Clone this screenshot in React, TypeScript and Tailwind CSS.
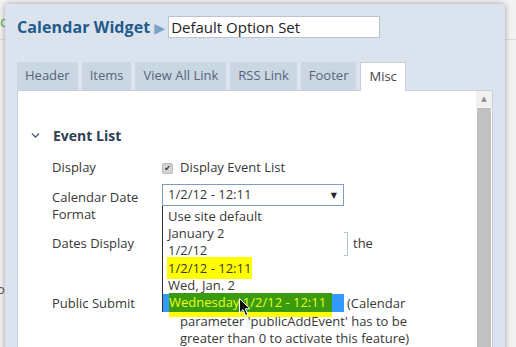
import React from 'react';
import { ChevronDown } from 'lucide-react';

const tabs = ['Header', 'Items', 'View All Link', 'RSS Link', 'Footer', 'Misc'];

const options = ['Use site default', 'January 2', '1/2/12', '1/2/12 - 12:11', 'Wed, Jan. 2', 'Wednesday 1/2/12 - 12:11'];

const Cursor = () => (
  <svg className="absolute left-[76px] top-[4px]" width="12" height="19" viewBox="0 0 12 19">
    <path d="M0.5 0.5 L0.5 15 L4 11.6 L6.6 17.6 L8.8 16.6 L6.3 10.8 L11 10.8 Z" fill="#111" stroke="#fff" strokeWidth="1" />
  </svg>
);

const App: React.FC = () => {
  return (
    <div className="relative w-[516px] h-[347px] overflow-hidden bg-[#f3f3f3] text-[13px] text-[#383838]" style={{ fontFamily: '"Open Sans", "DejaVu Sans", sans-serif' }}>
      {/* page behind the dialog */}
      <div className="absolute left-0 top-[10px] text-[15px] text-[#4caf50]">d</div>
      <div className="absolute left-0 right-0 top-[39px] h-px bg-[#dcdcdc]" />
      <div className="absolute left-[-3px] top-[280px] text-[#555]">o(</div>

      {/* dialog */}
      <div className="absolute left-[5px] top-[4px] w-[500px] h-[370px] bg-[#dae3ee] shadow-[0_0_6px_rgba(0,0,0,0.35)] pl-[12px] pt-[12px]">
        <div className="flex items-center h-[22px]">
          <span className="text-[16px] font-bold text-[#1f5b8b] tracking-[0.1px]">Calendar Widget</span>
          <span className="ml-[4px] text-[#7fa3c8] text-[14px]">▶</span>
          <div className="ml-[3px] w-[212px] h-[22px] bg-white border border-[#b9c4d0] px-[2px] flex items-center text-[15px] text-[#222]">Default Option Set</div>
        </div>

        <div className="flex gap-[4px] mt-[24px] h-[28px] relative z-10">
          {tabs.map(t => (
            <div
              key={t}
              className={t === 'Misc'
                ? 'px-[8px] h-[29px] flex items-center bg-white border border-b-0 border-[#c6d0dc] text-[#444]'
                : 'px-[8px] h-[28px] flex items-center bg-[#cbd6e3] text-[#55657a]'}
            >
              {t}
            </div>
          ))}
        </div>

        <div className="flex w-[476px] h-[260px] border border-[#c6d0dc] bg-white">
          <div className="flex-1 relative">
            <div className="flex items-center mt-[35px] h-[18px]">
              <ChevronDown className="w-[13px] h-[13px] ml-[11px] text-[#3d5166]" strokeWidth={2.5} />
              <span className="ml-[11px] font-bold text-[14px] text-[#2e4053]">Event List</span>
            </div>

            <div className="flex items-center mt-[15px] h-[18px] pl-[34px]">
              <span className="w-[110px]">Display</span>
              <span className="w-[11px] h-[11px] rounded-[2px] bg-[#d5d5d5] border border-[#bbb] flex items-center justify-center text-[8px] leading-none text-[#333]">✔</span>
              <span className="ml-[7px]">Display Event List</span>
            </div>

            <div className="flex items-start mt-[7px] pl-[34px]">
              <div className="w-[110px] leading-[17px] pt-[5px]">Calendar Date<br />Format</div>
              <div className="relative">
                <div className="w-[182px] h-[22px] border border-[#7d9cc0] bg-white flex items-center justify-between pl-[5px] pr-[6px]">
                  <span>1/2/12 - 12:11</span>
                  <span className="text-[8px] text-[#222]">▼</span>
                </div>
                <div className="absolute left-0 top-[22px] w-[182px] z-20 border-l border-[#333] bg-white leading-[17.2px] pt-[2px]">
                  {options.map((o, i) => (
                    <div key={o} className={i === 5 ? 'relative bg-[#3399ff] h-[18px]' : 'pl-[5px] h-[17.2px]'}>
                      {i === 3 ? (
                        <span className="bg-[#ffff00] px-[1px] -ml-[1px] py-[2px]">{o}</span>
                      ) : i === 5 ? (
                        <>
                          <span className="absolute left-[6px] top-[-1px] h-[24px] w-[163px] bg-[#ffff00]" />
                          <span className="absolute left-[6px] top-[-1px] h-[19px] w-[163px] bg-[#3a9a10]" />
                          <span className="relative pl-[6px] text-[#e8ff1a]">{o}</span>
                          <Cursor />
                        </>
                      ) : (
                        o
                      )}
                    </div>
                  ))}
                </div>
              </div>
            </div>

            <div className="flex items-center mt-[9px] h-[24px] pl-[34px]">
              <span className="w-[110px]">Dates Display</span>
              <div className="w-[186px] h-[24px] border border-[#b8c2ce] bg-white" />
              <span className="ml-[5px]">the</span>
            </div>

            <div className="flex items-start mt-[39px] pl-[34px] leading-[17.5px]">
              <span className="w-[110px]">Public Submit</span>
              <span className="mt-[3px] w-[11px] h-[11px] rounded-[2px] bg-[#d5d5d5] border border-[#bbb]" />
              <div className="ml-[7px] w-[245px] indent-[167px]">(Calendar parameter 'publicAddEvent' has to be greater than 0 to activate this feature)</div>
            </div>
          </div>

          <div className="w-[16px] flex flex-col">
            <div className="h-[17px] bg-[#f1f1f1] flex items-center justify-center text-[7px] text-[#8a8a8a]">▲</div>
            <div className="flex-1 bg-[#c1c1c1] mx-[1px]" />
          </div>
        </div>
      </div>
    </div>
  );
};

export default App;
